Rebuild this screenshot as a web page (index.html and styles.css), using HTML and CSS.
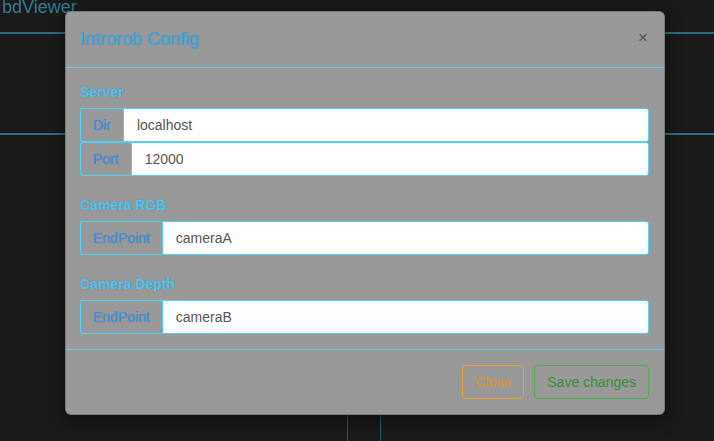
FILE: index.html
```html
<!DOCTYPE html>
<html>
<head>
<meta charset="utf-8">
<link rel="stylesheet" href="styles.css">
</head>
<body>
<div class="page">
  <div class="navbar"><span class="brand">bdViewer</span></div>
  <div class="panel"></div>
  <div class="stage"><div class="column"></div></div>
</div>

<div class="modal">
  <div class="modal-header">
    <h4 class="modal-title">Introrob Config</h4>
    <span class="close">×</span>
  </div>
  <div class="modal-body">
    <div class="group">
      <label class="label">Server</label>
      <div class="input-group">
        <span class="addon">Dir</span>
        <input class="field" type="text" value="localhost">
      </div>
      <div class="input-group">
        <span class="addon">Port</span>
        <input class="field" type="text" value="12000">
      </div>
    </div>
    <div class="group">
      <label class="label">Camera RGB</label>
      <div class="input-group">
        <span class="addon">EndPoint</span>
        <input class="field" type="text" value="cameraA">
      </div>
    </div>
    <div class="group">
      <label class="label">Camera Depth</label>
      <div class="input-group">
        <span class="addon">EndPoint</span>
        <input class="field" type="text" value="cameraB">
      </div>
    </div>
  </div>
  <div class="modal-footer">
    <button class="btn btn-close">Close</button>
    <button class="btn btn-save">Save changes</button>
  </div>
</div>
</body>
</html>
```

FILE: styles.css
```css
* { box-sizing: border-box; }
html, body { margin: 0; padding: 0; }
body {
  width: 714px;
  height: 441px;
  overflow: hidden;
  background: #1a1a1a;
  font-family: "Liberation Sans", Arial, sans-serif;
  position: relative;
}
.page {
  display: flex;
  flex-direction: column;
  height: 441px;
}
.navbar {
  height: 34px;
  border-bottom: 2px solid #2c6e7e;
}
.brand {
  display: block;
  margin-left: 2px;
  margin-top: -4px;
  font-size: 18px;
  line-height: 22px;
  color: #2f7890;
}
.panel {
  height: 101px;
  border-bottom: 2px solid #2c6e7e;
}
.stage {
  flex: 1;
  display: flex;
}
.column {
  margin-left: 347px;
  width: 34px;
  border-left: 1px solid #21606f;
  border-right: 1px solid #21606f;
}

.modal {
  position: absolute;
  left: 65px;
  top: 11px;
  width: 600px;
  background: #999999;
  border: 1px solid rgba(0,0,0,0.2);
  border-radius: 6px;
  box-shadow: 0 5px 15px rgba(0,0,0,0.5);
}
.modal-header {
  display: flex;
  align-items: center;
  justify-content: space-between;
  padding: 15px 15px 15px 14px;
  border-bottom: 1px solid #5ccbee;
}
.modal-title {
  margin: 0;
  font-size: 18px;
  font-weight: normal;
  line-height: 25px;
  color: #36abe4;
  text-shadow: 0 0 1px rgba(20,60,110,0.35);
}
.close {
  font-size: 17px;
  line-height: 18px;
  color: #555;
  margin-right: 1px;
  margin-top: -3px;
}
.modal-body {
  padding: 15px 15px 15px 14px;
  display: flex;
  flex-direction: column;
  gap: 20px;
}
.group {
  display: flex;
  flex-direction: column;
}
.label {
  font-size: 14px;
  font-weight: bold;
  line-height: 19px;
  margin-bottom: 6px;
  color: #4cc6f2;
  text-shadow: 0 0 1px rgba(20,60,110,0.4);
}
.input-group {
  display: flex;
  height: 34px;
}
.addon {
  display: flex;
  align-items: center;
  padding: 0 12px;
  font-size: 14px;
  color: #3a90e4;
  text-shadow: 0 0 1px rgba(20,50,110,0.25);
  border: 1px solid #4fd0f6;
  border-right: none;
  border-radius: 3px 0 0 3px;
}
.field {
  flex: 1;
  min-width: 0;
  height: 34px;
  border: 1px solid #4fd0f6;
  border-radius: 0 3px 3px 0;
  background: #fff;
  padding: 0 13px;
  font-family: "Liberation Sans", Arial, sans-serif;
  font-size: 14px;
  color: #555;
  outline: none;
}
.modal-footer {
  border-top: 1px solid #5ccbee;
  padding: 15px;
  display: flex;
  justify-content: flex-end;
  gap: 10px;
}
.btn {
  height: 34px;
  padding: 6px 12px;
  font-family: "Liberation Sans", Arial, sans-serif;
  font-size: 14px;
  line-height: 20px;
  background: transparent;
  border-radius: 4px;
}
.btn-close {
  border: 1px solid #f0a030;
  color: #e0902a;
}
.btn-save {
  border: 1px solid #4cae4c;
  color: #36903a;
}
```
